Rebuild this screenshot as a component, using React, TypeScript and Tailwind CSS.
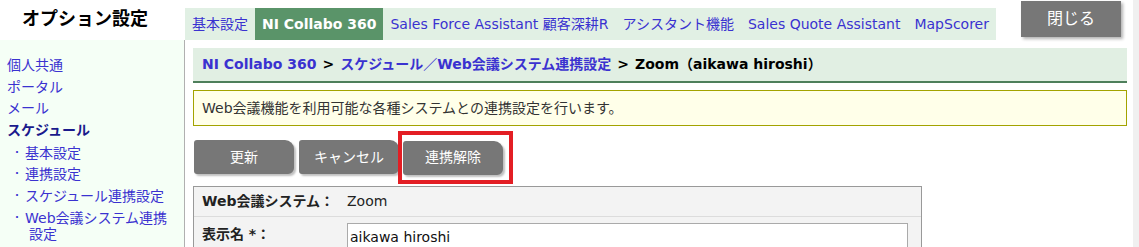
import React from "react"

const font = "font-['DejaVu_Sans','Noto_Sans_CJK_JP',sans-serif]"

const tabs = [
  { label: "基本設定" },
  { label: "NI Collabo 360", active: true },
  { label: "Sales Force Assistant 顧客深耕R" },
  { label: "アシスタント機能" },
  { label: "Sales Quote Assistant" },
  { label: "MapScorer" },
]

const menu = [
  { label: "個人共通" },
  { label: "ポータル" },
  { label: "メール" },
  { label: "スケジュール", bold: true },
]

const subMenu = ["基本設定", "連携設定", "スケジュール連携設定", "Web会議システム連携設定"]

function GrayButton({ label }: { label: string }) {
  return (
    <button className="w-[100px] h-[34px] bg-[#777777] text-white text-[14px] rounded-[3px] rounded-tr-[9px] rounded-br-[6px] shadow-[2px_2px_2px_rgba(0,0,0,0.25)]">
      {label}
    </button>
  )
}

export default function App() {
  return (
    <div className={`${font} w-[1139px] h-[247px] overflow-hidden bg-white flex text-[14px]`}>
      <div className="w-[1133px] flex flex-col">
        {/* header */}
        <div className="h-[40px] flex">
          <div className="w-[185px] flex items-center pl-[22px] pb-[4px]">
            <h1 className="text-[18px] font-bold text-black">オプション設定</h1>
          </div>
          <div className="mt-[8px] flex bg-[#e1f0e4] h-[32px]">
            {tabs.map((t) =>
              t.active ? (
                <span key={t.label} className="px-[7px] flex items-center bg-[#5a9469] text-white font-bold">
                  {t.label}
                </span>
              ) : (
                <a key={t.label} href="#" className="px-[7px] flex items-center text-[#3a32d0]">
                  {t.label}
                </a>
              )
            )}
          </div>
          <div className="flex-1" />
          <button className="mt-[1px] mr-[12px] w-[100px] h-[36px] bg-[#777777] text-white text-[16px] shadow-[2px_2px_3px_rgba(0,0,0,0.3)]">
            閉じる
          </button>
        </div>
        <div className="h-[2px] bg-[#4e7f5b] mr-[2px]" />

        {/* body */}
        <div className="flex flex-1">
          <div className="w-[185px] bg-[#f5fff6] border-r border-[#b0b0b0] pl-[7px] pt-[15px]">
            {menu.map((m) => (
              <div key={m.label} className="h-[21.7px] leading-[21.7px]">
                <a href="#" className={m.bold ? "font-bold text-[#1a1a8c]" : "text-[#3a32d0]"}>
                  {m.label}
                </a>
              </div>
            ))}
            {subMenu.map((s) => (
              <div key={s} className="flex min-h-[21.7px] leading-[16px] pt-[3px]">
                <span className="w-[20px] pl-[5px] text-[#3a32d0] text-[10px] leading-[16px]">・</span>
                <a href="#" className="text-[#3a32d0] w-[150px] -indent-[4px] pl-[2px]">
                  {s}
                </a>
              </div>
            ))}
          </div>

          <div className="flex-1 pl-[8px] pr-[6px] pt-[8px]">
            <div className="h-[35px] bg-[#e1efe3] border-b-2 border-[#4e7f5b] flex items-center pl-[9px] pb-[1px] font-bold">
              <a href="#" className="text-[#3a32d0]">NI Collabo 360</a>
              <span className="mx-[6px] text-black">&gt;</span>
              <a href="#" className="text-[#3a32d0]">スケジュール／Web会議システム連携設定</a>
              <span className="mx-[6px] text-black">&gt;</span>
              <span className="text-black">Zoom（aikawa hiroshi）</span>
            </div>

            <div className="mt-[7px] h-[36px] bg-[#ffffe9] border border-[#a3a300] flex items-center pl-[8px] text-[#333]">
              Web会議機能を利用可能な各種システムとの連携設定を行います。
            </div>

            <div className="mt-[14px] flex gap-[5px] pl-[1px] items-center">
              <GrayButton label="更新" />
              <GrayButton label="キャンセル" />
              <div className="border-[4px] border-[#e31e24] -my-[10px] -ml-[6px] pl-[1px] pr-[6px] pt-[6px] pb-[5px]">
                <GrayButton label="連携解除" />
              </div>
            </div>

            <div className="mt-[12px] w-[729px] bg-[#f3f3f3] border border-[#999]">
              <div className="h-[30px] flex items-center border-b border-[#dcdcdc]">
                <span className="w-[153px] pl-[8px] font-bold text-[#222]">Web会議システム：</span>
                <span className="text-[#222]">Zoom</span>
              </div>
              <div className="flex pt-[6px] h-[40px]">
                <span className="w-[153px] pl-[8px] pt-[1px] font-bold text-[#222]">表示名 *：</span>
                <div className="w-[561px] h-[30px] bg-white border border-[#aaa] pl-[2px] pt-[3px] text-[#111]">
                  aikawa hiroshi
                </div>
              </div>
            </div>
          </div>
        </div>
      </div>
      <div className="w-[6px] bg-[#f0f0f0]" />
    </div>
  )
}
